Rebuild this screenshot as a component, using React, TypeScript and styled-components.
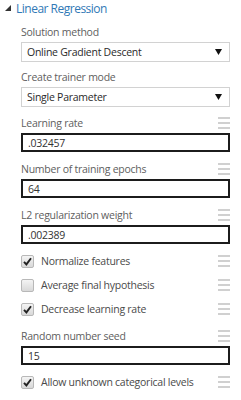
import React from "react";
import styled, { createGlobalStyle } from "styled-components";

const Global = createGlobalStyle`
  html, body { margin: 0; padding: 0; background: #fff; }
  body { font-family: "Open Sans", "Noto Sans", Arial, sans-serif; }
`;

const Panel = styled.div`
  width: 241px;
  height: 400px;
  overflow: hidden;
  background: #fff;
  display: flex;
  flex-direction: column;
`;

const Header = styled.div`
  height: 16px;
  display: flex;
  align-items: center;
  gap: 5px;
  padding-left: 5px;
  color: #3079b6;
  font-size: 12px;
  letter-spacing: -0.5px;
`;

const Body = styled.div`
  display: flex;
  flex-direction: column;
  padding-left: 21px;
  width: 209px;
  font-size: 10.5px;
  letter-spacing: -0.25px;
`;

const Field = styled.div<{ $mt: number }>`
  display: flex;
  flex-direction: column;
  gap: 2px;
  margin-top: ${(p) => p.$mt}px;
`;

const LabelRow = styled.div`
  height: 16px;
  display: flex;
  align-items: center;
  justify-content: space-between;
  color: #606060;
`;

const SelectBox = styled.div`
  box-sizing: border-box;
  height: 20px;
  border: 1px solid #d2d2d2;
  display: flex;
  align-items: center;
  justify-content: space-between;
  padding: 0 7px 0 5px;
  color: #2a2a2a;
`;

const InputBox = styled.div`
  box-sizing: border-box;
  height: 19px;
  border: 2px solid #1c1c1c;
  display: flex;
  align-items: center;
  padding: 0 5px;
  color: #333;
`;

const CheckRow = styled.div<{ $mt?: number }>`
  height: 24px;
  display: flex;
  align-items: center;
  margin-top: ${(p) => p.$mt ?? 0}px;
  color: #4a4a4a;
`;

const Box = styled.span`
  box-sizing: border-box;
  width: 13px;
  height: 13px;
  border: 1px solid #b8b8b8;
  border-radius: 2px;
  background: linear-gradient(#f4f4f4, #d8d8d8);
  display: flex;
  align-items: center;
  justify-content: center;
  margin-right: 7px;
  flex: none;
`;

const CheckText = styled.span`
  flex: 1;
`;

const Grip = styled.span`
  width: 12px;
  display: flex;
  flex-direction: column;
  gap: 3px;
  flex: none;
  & > i {
    display: block;
    height: 2px;
    background: #d0d0d0;
  }
`;

const Handle = () => (
  <Grip>
    <i />
    <i />
    <i />
  </Grip>
);

const Check = ({ checked }: { checked: boolean }) => (
  <Box>
    {checked && (
      <svg width="9" height="9" viewBox="0 0 9 9">
        <path d="M1 4.8 L3.4 7.4 L8 1.2" fill="none" stroke="#222" strokeWidth="1.9" />
      </svg>
    )}
  </Box>
);

const Arrow = () => (
  <svg width="7" height="6" viewBox="0 0 7 6">
    <path d="M0 0 H7 L3.5 6 Z" fill="#111" />
  </svg>
);

const Caret = () => (
  <svg width="6" height="6" viewBox="0 0 6 6">
    <path d="M6 0 V6 H0 Z" fill="#333" />
  </svg>
);

export default function App() {
  return (
    <Panel>
      <Global />
      <Header>
        <Caret />
        <span>Linear Regression</span>
      </Header>
      <Body>
        <Field $mt={8}>
          <LabelRow>Solution method</LabelRow>
          <SelectBox>
            <span>Online Gradient Descent</span>
            <Arrow />
          </SelectBox>
        </Field>
        <Field $mt={7}>
          <LabelRow>Create trainer mode</LabelRow>
          <SelectBox>
            <span>Single Parameter</span>
            <Arrow />
          </SelectBox>
        </Field>
        <Field $mt={8}>
          <LabelRow>
            <span>Learning rate</span>
            <Handle />
          </LabelRow>
          <InputBox>.032457</InputBox>
        </Field>
        <Field $mt={9}>
          <LabelRow>
            <span>Number of training epochs</span>
            <Handle />
          </LabelRow>
          <InputBox>64</InputBox>
        </Field>
        <Field $mt={9}>
          <LabelRow>
            <span>L2 regularization weight</span>
            <Handle />
          </LabelRow>
          <InputBox>.002389</InputBox>
        </Field>
        <CheckRow $mt={5}>
          <Check checked />
          <CheckText>Normalize features</CheckText>
          <Handle />
        </CheckRow>
        <CheckRow>
          <Check checked={false} />
          <CheckText>Average final hypothesis</CheckText>
          <Handle />
        </CheckRow>
        <CheckRow>
          <Check checked />
          <CheckText>Decrease learning rate</CheckText>
          <Handle />
        </CheckRow>
        <Field $mt={7}>
          <LabelRow>
            <span>Random number seed</span>
            <Handle />
          </LabelRow>
          <InputBox>15</InputBox>
        </Field>
        <CheckRow $mt={5}>
          <Check checked />
          <CheckText>Allow unknown categorical levels</CheckText>
          <Handle />
        </CheckRow>
      </Body>
    </Panel>
  );
}
